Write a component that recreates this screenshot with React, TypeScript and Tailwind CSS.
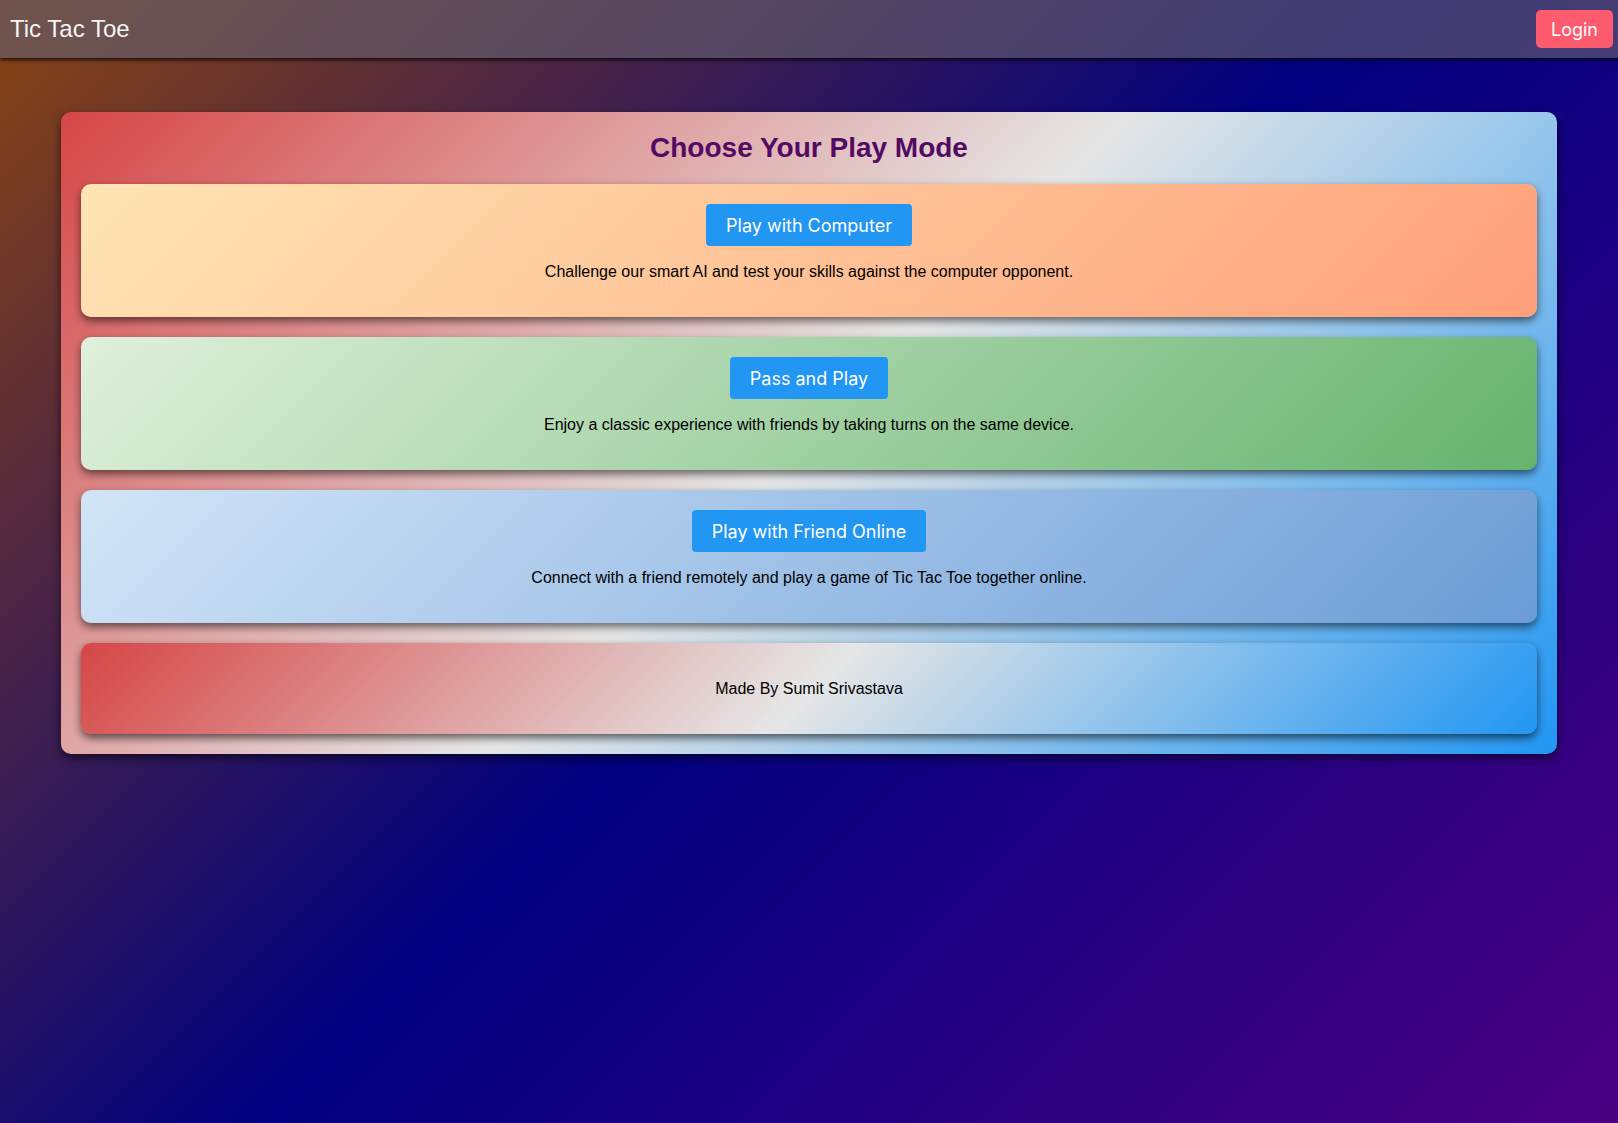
import React from 'react';

const modes = [
  {
    label: 'Play with Computer',
    text: 'Challenge our smart AI and test your skills against the computer opponent.',
    bg: 'bg-[linear-gradient(135deg,#ffe5b4,#ffa07a)]',
  },
  {
    label: 'Pass and Play',
    text: 'Enjoy a classic experience with friends by taking turns on the same device.',
    bg: 'bg-[linear-gradient(135deg,#e0f0dc,#66b36e)]',
  },
  {
    label: 'Play with Friend Online',
    text: 'Connect with a friend remotely and play a game of Tic Tac Toe together online.',
    bg: 'bg-[linear-gradient(135deg,#d2e5f7,#6b9cd6)]',
  },
];

export default function App() {
  return (
    <div className="min-h-screen bg-[linear-gradient(135deg,#8b4513,#000080,#4b0082)] font-['Liberation_Sans',Arial,sans-serif]">
      <nav className="h-[58px] flex items-center justify-between pl-[10px] pr-[5px] bg-[rgba(98,92,108,0.65)] shadow-[0_2px_4px_rgba(0,0,0,0.8)]">
        <span className="text-[24px] text-[#f5f5f5]">Tic Tac Toe</span>
        <button className="h-[38px] px-[15px] rounded-[5px] bg-[#fe5b6e] text-white text-[18px] font-['Inter',sans-serif]">
          Login
        </button>
      </nav>

      <main className="mx-[61px] mt-[54px] rounded-[10px] px-5 pt-5 pb-5 bg-[linear-gradient(135deg,#d64646,#e6e6e6,#2196f3)] shadow-[0_4px_10px_rgba(0,0,0,0.6)]">
        <h1 className="text-center text-[28px] leading-[32px] font-bold text-[#530a63] mb-5">
          Choose Your Play Mode
        </h1>
        <div className="flex flex-col gap-5">
          {modes.map((m) => (
            <div
              key={m.label}
              className={`${m.bg} rounded-[10px] px-5 pt-5 pb-5 text-center shadow-[0_4px_8px_rgba(0,0,0,0.55)]`}
            >
              <button className="h-[42px] px-5 rounded-[4px] bg-[#2196f3] text-white text-[18px] font-['Inter',sans-serif]">
                {m.label}
              </button>
              <p className="my-4 text-[16px] leading-[19px] text-black">{m.text}</p>
            </div>
          ))}
          <div className="bg-[linear-gradient(135deg,#d64646,#e6e6e6,#2196f3)] rounded-[10px] px-5 py-5 text-center shadow-[0_4px_8px_rgba(0,0,0,0.6)]">
            <p className="my-4 text-[16px] leading-[19px] text-black">Made By Sumit Srivastava</p>
          </div>
        </div>
      </main>
    </div>
  );
}
